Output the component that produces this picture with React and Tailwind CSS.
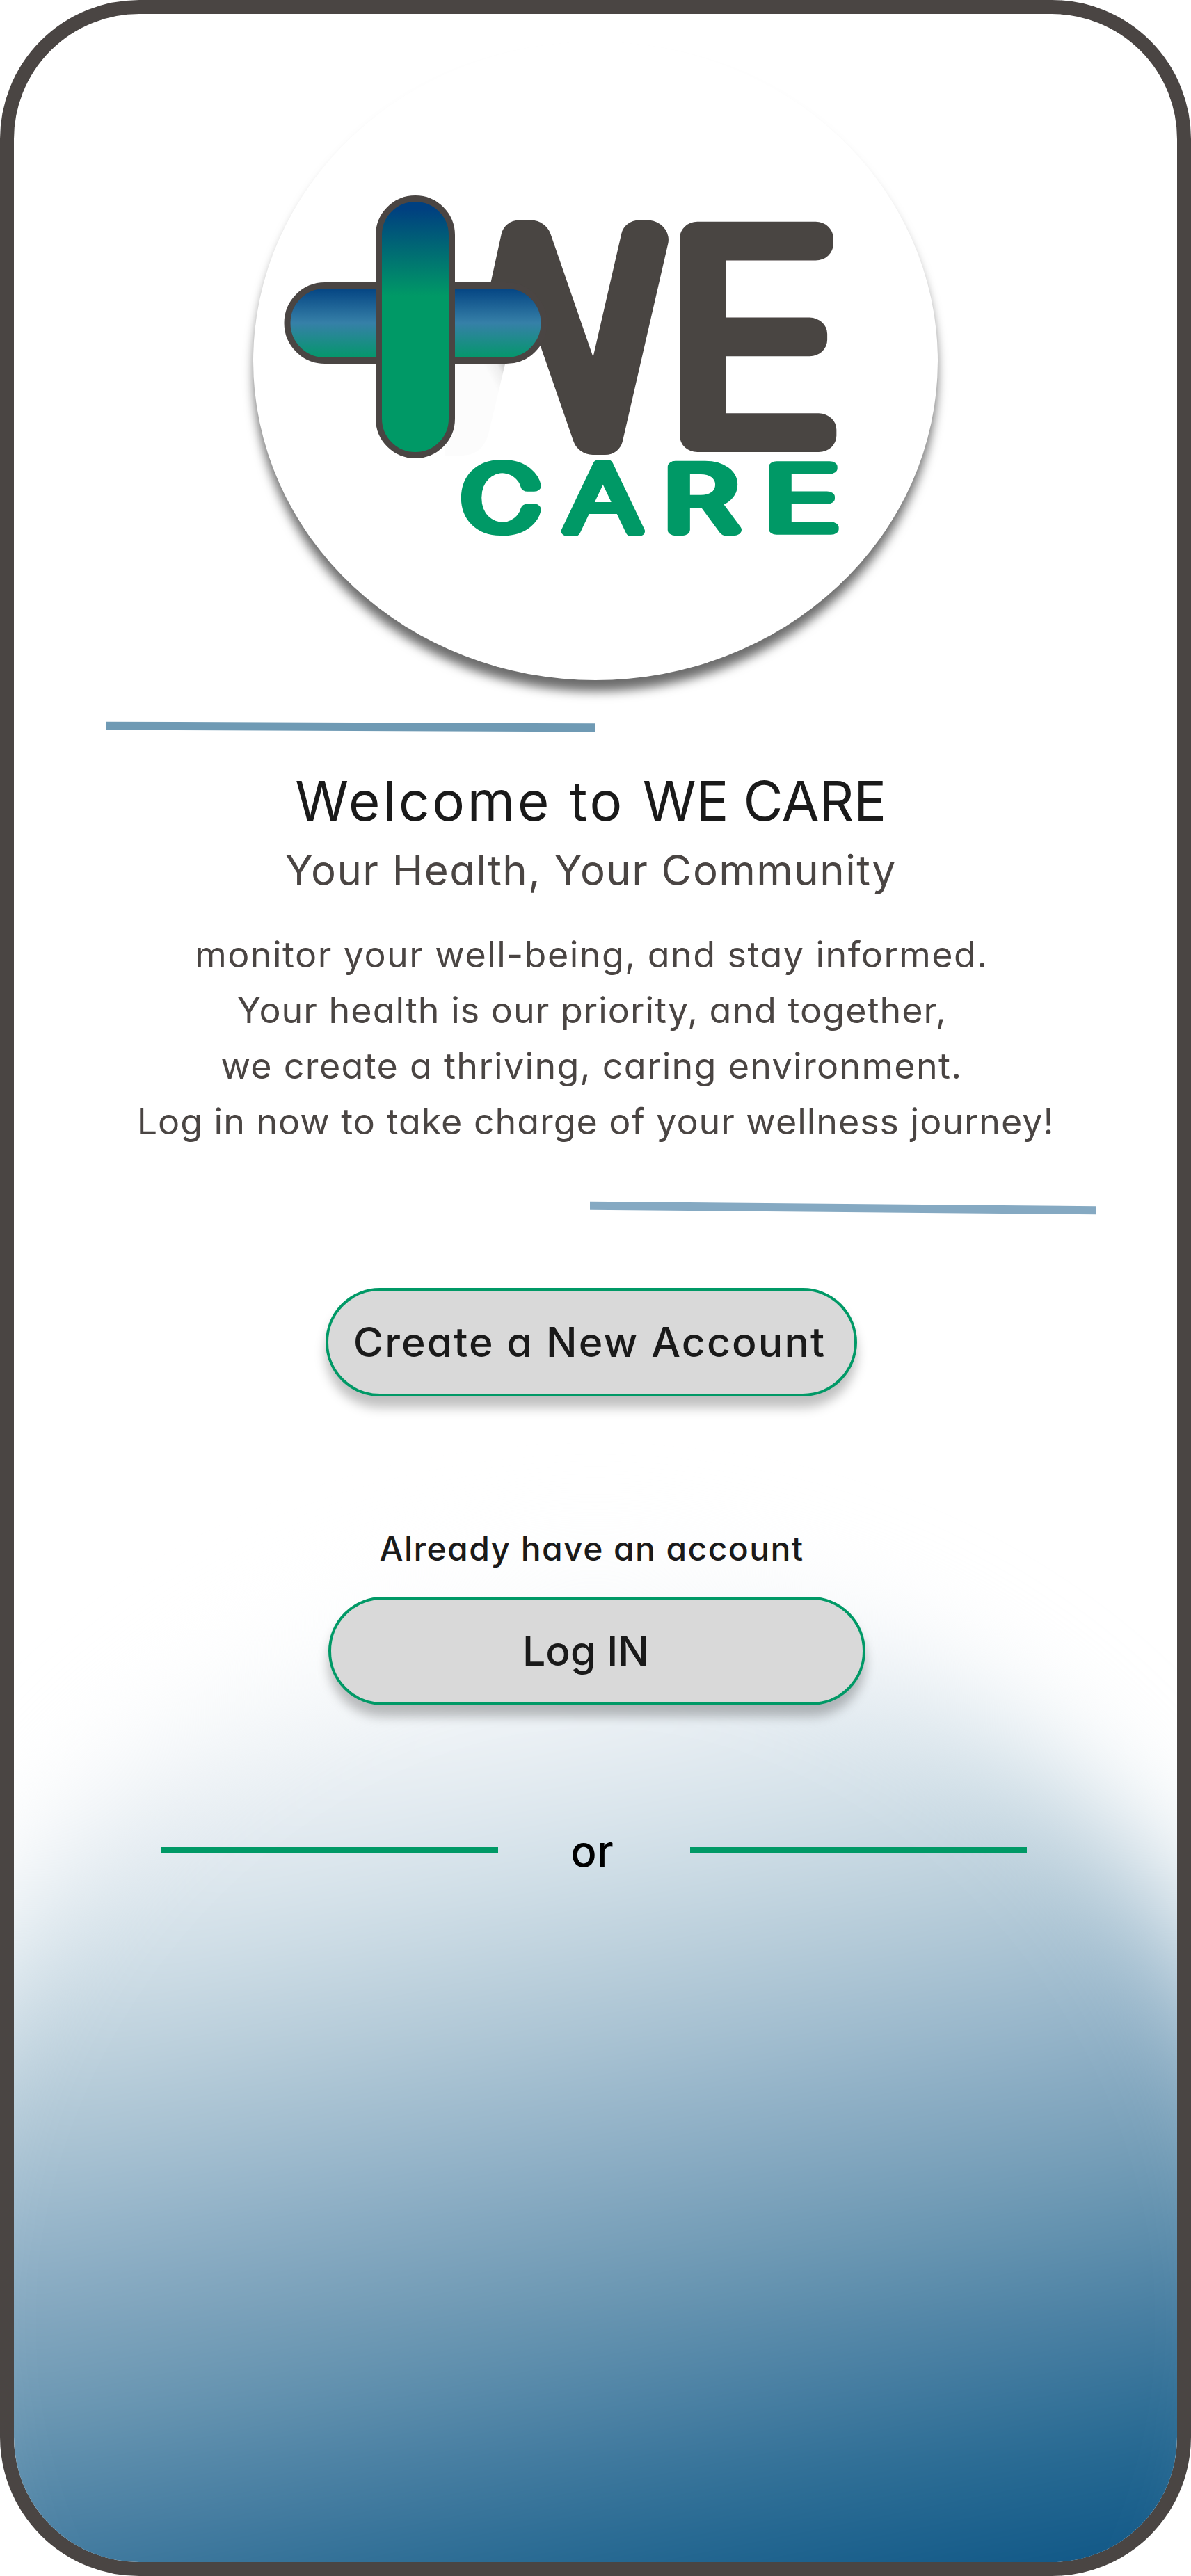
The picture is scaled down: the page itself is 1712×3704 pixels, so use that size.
function Glyph({ ch, x, y, sx, sy, stroke, skew = 0 }) {
  return (
    <text
      transform={`translate(${x} ${y}) scale(${sx} ${sy}) skewX(${skew})`}
      className="font-[Inter,sans-serif] text-[100px] font-thin"
      fill="currentColor"
      stroke="currentColor"
      strokeWidth={stroke}
      strokeLinejoin="round"
      strokeLinecap="round"
    >
      {ch}
    </text>
  );
}

function Logo() {
  return (
    <svg viewBox="364 60 984 918" className="h-full w-full" role="img" aria-label="We Care">
      <defs>
        <linearGradient id="bar-v" x1="0" y1="0" x2="0" y2="1">
          <stop offset="0.04" stopColor="#004080" />
          <stop offset="0.38" stopColor="#009966" />
        </linearGradient>
        <linearGradient id="bar-h" x1="0" y1="0" x2="0" y2="1">
          <stop offset="0" stopColor="#004080" />
          <stop offset="0.5" stopColor="#3680a8" />
          <stop offset="1" stopColor="#009966" />
        </linearGradient>
        <linearGradient id="fade" gradientUnits="userSpaceOnUse" x1="730" y1="518" x2="700" y2="534">
          <stop offset="0" stopColor="#b0b0b0" />
          <stop offset="0.5" stopColor="#eeeeee" />
          <stop offset="1" stopColor="#fcfcfc" />
        </linearGradient>
        <clipPath id="w-front">
          <path d="M654 300H1000V680H764V500H654Z" />
        </clipPath>
        <filter id="widen" filterUnits="userSpaceOnUse" x="364" y="60" width="984" height="918">
          <feMorphology operator="dilate" radius="2.5 0" />
        </filter>
        <filter id="widen-w" filterUnits="userSpaceOnUse" x="364" y="60" width="984" height="918">
          <feMorphology operator="dilate" radius="2 0" />
        </filter>
      </defs>

      <path d="M640 515H728L702 625Q693 654 665 655H640Z" fill="url(#fade)" />
      <g className="text-[#4a4543]">
        <g clipPath="url(#w-front)">
          <g filter="url(#widen-w)">
            <Glyph ch="W" x={586.5} y={627.6} sx={4.05} sy={3.91} stroke={13.5} skew={3.5} />
          </g>
        </g>
        <g filter="url(#widen)">
          <Glyph ch="E" x={957.5} y={626.6} sx={4.23} sy={3.908} stroke={12} />
        </g>
      </g>

      <g className="text-[#009966]" filter="url(#widen)">
        <Glyph ch="C" x={664.8} y={760.9} sx={1.535} sy={1.244} stroke={13} />
        <Glyph ch="A" x={813.1} y={763.6} sx={1.684} sy={1.318} stroke={10.5} />
        <Glyph ch="R" x={954.5} y={762.3} sx={1.711} sy={1.254} stroke={13} />
        <Glyph ch="E" x={1099.1} y={760.6} sx={1.805} sy={1.232} stroke={12.5} />
      </g>

      <rect x="413" y="410.5" width="369" height="108" rx="54" fill="url(#bar-h)" stroke="#4a4543" strokeWidth="9" />
      <rect x="544.5" y="285.5" width="105" height="369" rx="52.5" fill="url(#bar-v)" stroke="#4a4543" strokeWidth="9" />
    </svg>
  );
}

function PillButton({ className, children }) {
  return (
    <button
      className={`flex h-[156px] items-center justify-center rounded-full border-4 border-[#009966] bg-[#d9d9d9] text-[59px] font-medium text-[#1a1a1a] shadow-[0_16px_16px_rgba(0,0,0,0.25)] ${className}`}
    >
      {children}
    </button>
  );
}

function Glow() {
  return (
    <div className="pointer-events-none absolute top-[2256px] left-[-174px] h-[2126px] w-[2020px] rounded-[50%] blur-[85px] bg-[linear-gradient(168.5deg,#ffffff_130px,#f8fafb_280px,#e4ebf1_453px,#d7e4eb_563px,#c3d5e0_684px,#b5cbd8_775px,#9ab8cc_935px,#7fa4bd_1096px,#6f9ab4_1197px,#578aaa_1312px,#437a9f_1425px,#266a92_1565px,#125888_1730px,#004b7d_1860px)]" />
  );
}

export default function App() {
  return (
    <div className="h-[3704px] w-[1712px] bg-white font-[Inter,sans-serif] [font-feature-settings:'cv11']">
      <main className="relative isolate flex h-full w-full flex-col items-center overflow-hidden rounded-[200px] border-[20px] border-[#4a4543] bg-white pt-10">
        <Glow />

        <div className="relative h-[918px] w-[984px] shrink-0 rounded-[50%] bg-white shadow-[0_17px_15px_-1px_rgba(0,0,0,0.58)]">
          <Logo />
        </div>

        <div className="mt-[61px] ml-[132px] h-3 w-[704px] shrink-0 skew-y-[0.22deg] self-start bg-[#6f9ab4]" />

        <h1 className="mt-[51px] pr-[14px] text-[78px] leading-[100px] tracking-[3.8px] text-[#1a1a1a]">
          Welcome to <span className="tracking-[-0.3px]">WE CARE</span>
        </h1>
        <h2 className="mt-[9px] pr-[14px] text-[60px] leading-[80px] tracking-[1.45px] text-[#4a4543]">
          Your Health, Your Community
        </h2>

        <div className="mt-[42px] flex flex-col items-center text-[52px] leading-[80px] whitespace-nowrap text-[#4a4543]">
          <p className="pr-[11px] tracking-[1.45px]">monitor your well-being, and stay informed.</p>
          <p className="pr-[11px] tracking-[1px]">Your health is our priority, and together,</p>
          <p className="pr-[11px] tracking-[1.3px]">we create a thriving, caring environment.</p>
          <p className="tracking-[0.95px]">Log in now to take charge of your wellness journey!</p>
        </div>

        <div className="mt-[78px] mr-[116px] h-3 w-[728px] shrink-0 skew-y-[0.5deg] self-end bg-[#85a9c2]" />

        <PillButton className="relative mt-[109px] mr-3 w-[764px] pr-[5px] tracking-[2.1px]">
          Create a New Account
        </PillButton>

        <p className="relative mt-[189px] pr-[11px] text-[48px] leading-[60px] font-medium tracking-[1.4px] text-[#1a1a1a]">
          Already have an account
        </p>
        <PillButton className="relative mt-[39px] ml-1 w-[772px] pr-[32px]">Log IN</PillButton>

        <div className="relative mt-[168px] mr-1 flex h-20 items-center">
          <span className="h-2 w-[484px] bg-[#009966]" />
          <span className="w-[276px] pt-[3px] pr-[6px] text-center text-[62px] leading-[77px] font-medium text-black">
            or
          </span>
          <span className="h-2 w-[484px] bg-[#009966]" />
        </div>
      </main>
    </div>
  );
}
